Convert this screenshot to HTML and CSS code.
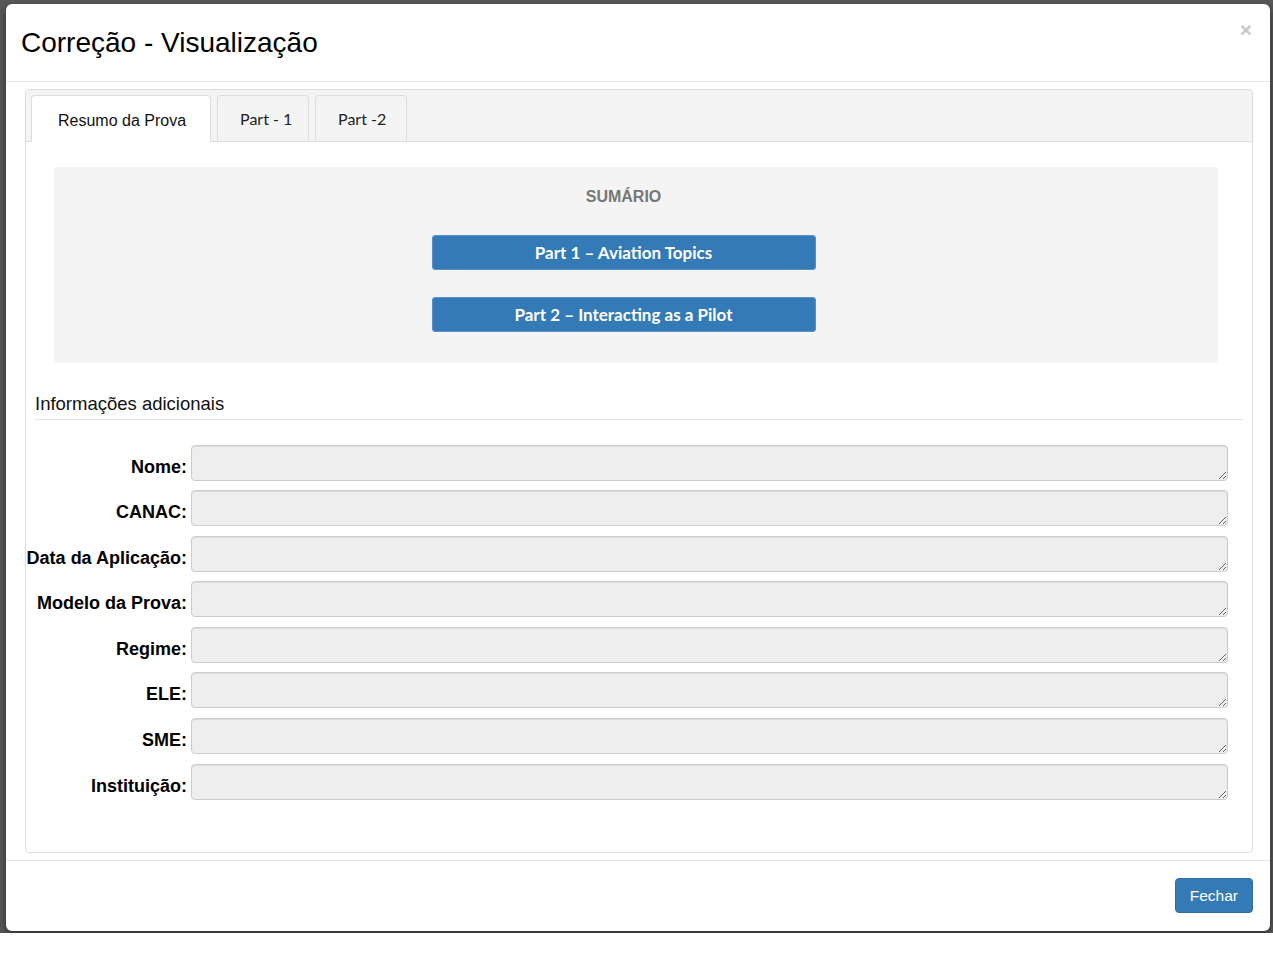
FILE: index.html
```html
<!DOCTYPE html>
<html lang="pt">
<head>
<meta charset="utf-8">
<title>Correção - Visualização</title>
<link rel="stylesheet" href="styles.css">
</head>
<body>
<div class="backdrop">
  <div class="modal">
    <div class="modal-header">
      <h4 class="modal-title">Correção - Visualização</h4>
      <button class="close" type="button">×</button>
    </div>
    <div class="modal-body">
      <div class="panel">
        <div class="tabs">
          <div class="tab active">Resumo da Prova</div>
          <div class="tab">Part - 1</div>
          <div class="tab">Part -2</div>
        </div>
        <div class="tab-content">
          <div class="summary">
            <div class="summary-title">SUMÁRIO</div>
            <div class="part-btn">Part 1 – Aviation Topics</div>
            <div class="part-btn second">Part 2 – Interacting as a Pilot</div>
          </div>
          <h5 class="info-title">Informações adicionais</h5>
          <div class="form">
            <label class="lbl">Nome:</label><textarea class="field" readonly></textarea>
            <label class="lbl">CANAC:</label><textarea class="field" readonly></textarea>
            <label class="lbl">Data da Aplicação:</label><textarea class="field" readonly></textarea>
            <label class="lbl">Modelo da Prova:</label><textarea class="field" readonly></textarea>
            <label class="lbl">Regime:</label><textarea class="field" readonly></textarea>
            <label class="lbl">ELE:</label><textarea class="field" readonly></textarea>
            <label class="lbl">SME:</label><textarea class="field" readonly></textarea>
            <label class="lbl">Instituição:</label><textarea class="field" readonly></textarea>
          </div>
        </div>
      </div>
    </div>
    <div class="modal-footer">
      <button class="btn-close" type="button">Fechar</button>
    </div>
  </div>
</div>
</body>
</html>
```
FILE: styles.css
```css
* { box-sizing: border-box; }
html, body {
  margin: 0;
  padding: 0;
  background: #ffffff;
  font-family: "Liberation Sans", Arial, sans-serif;
  color: #000;
}
.backdrop {
  height: 933px;
  background: #595959;
  padding: 4px 3px 0 6px;
}
.modal {
  width: 1264px;
  background: #fff;
  border-radius: 6px;
  box-shadow: 0 3px 9px rgba(0,0,0,0.5);
}
.modal-header {
  display: flex;
  align-items: flex-start;
  padding: 23px 15px 23px 15px;
  border-bottom: 1px solid #e5e5e5;
}
.modal-title {
  flex: 1;
  margin: 0;
  font-size: 28px;
  font-weight: normal;
  line-height: 31px;
}
.close {
  border: 0;
  background: transparent;
  padding: 0;
  margin: -8px 3px 0 0;
  font-family: "Liberation Sans", Arial, sans-serif;
  font-size: 21px;
  font-weight: bold;
  line-height: 1;
  color: #c8c8c8;
}
.modal-body {
  padding: 7px 17px 7px 19px;
}
.panel {
  border: 1px solid #ddd;
  border-radius: 4px;
}
.tabs {
  display: flex;
  align-items: flex-start;
  gap: 6px;
  height: 52px;
  padding: 5px 6px 0 5px;
  background: #f4f4f4;
  border-bottom: 1px solid #ddd;
  border-radius: 4px 4px 0 0;
}
.tab {
  width: 92px;
  height: 46px;
  padding: 13px 0 0 22px;
  border: 1px solid #ddd;
  border-bottom: 0;
  border-radius: 4px 4px 0 0;
  background: #f4f4f4;
  font-family: Lato, "Open Sans", sans-serif;
  font-size: 16px;
  line-height: 20px;
  color: #222;
  white-space: nowrap;
}
.tab.active {
  width: auto;
  height: 47px;
  margin-right: 0;
  padding: 16px 24px 0 26px;
  background: #fff;
  font-family: "Liberation Sans", Arial, sans-serif;
  font-size: 16px;
  line-height: 18px;
  color: #111;
}
.tab-content {
  padding: 25px 0 52px 0;
}
.summary {
  margin: 0 34px 0 28px;
  height: 196px;
  padding-top: 21px;
  background: #f4f4f4;
  display: flex;
  flex-direction: column;
  align-items: center;
}
.summary-title {
  margin-left: -25px;
  font-size: 16px;
  font-weight: bold;
  line-height: 18px;
  color: #777;
}
.part-btn {
  margin-top: 29px;
  margin-left: -25px;
  width: 384px;
  height: 35px;
  background: #337ab7;
  border: 1px solid #5a90c6;
  border-radius: 3px;
  color: #fff;
  text-align: center;
  font-family: Lato, "Open Sans", sans-serif;
  font-weight: bold;
  font-size: 17px;
  line-height: 34px;
}
.part-btn.second {
  margin-top: 27px;
}
.info-title {
  margin: 29.5px 9px 0 9px;
  padding-bottom: 5px;
  border-bottom: 1px solid #e5e5e5;
  font-size: 18.5px;
  font-weight: normal;
  line-height: 21px;
  color: #111;
}
.form {
  margin: 25px 24px 0 0;
  display: grid;
  grid-template-columns: 161px 1fr;
  column-gap: 4px;
  row-gap: 9.6px;
}
.lbl {
  align-self: start;
  padding-top: 12px;
  text-align: right;
  font-size: 18px;
  font-weight: bold;
  line-height: 21px;
  white-space: nowrap;
}
.field {
  display: block;
  width: 100%;
  height: 36px;
  margin: 0;
  background: #eeeeee;
  border: 1px solid #cccccc;
  border-radius: 4px;
  box-shadow: inset 0 1px 1px rgba(0,0,0,0.075);
  resize: vertical;
  font-family: "Liberation Sans", Arial, sans-serif;
  font-size: 14px;
  outline: none;
}
.modal-footer {
  display: flex;
  justify-content: flex-end;
  padding: 17px 17px 18px 17px;
  border-top: 1px solid #e5e5e5;
}
.btn-close {
  height: 35px;
  padding: 0 14px;
  background: #337ab7;
  border: 1px solid #2e6da4;
  border-radius: 4px;
  color: #fff;
  font-family: "Liberation Sans", Arial, sans-serif;
  font-size: 15.5px;
  line-height: 33px;
}
```
